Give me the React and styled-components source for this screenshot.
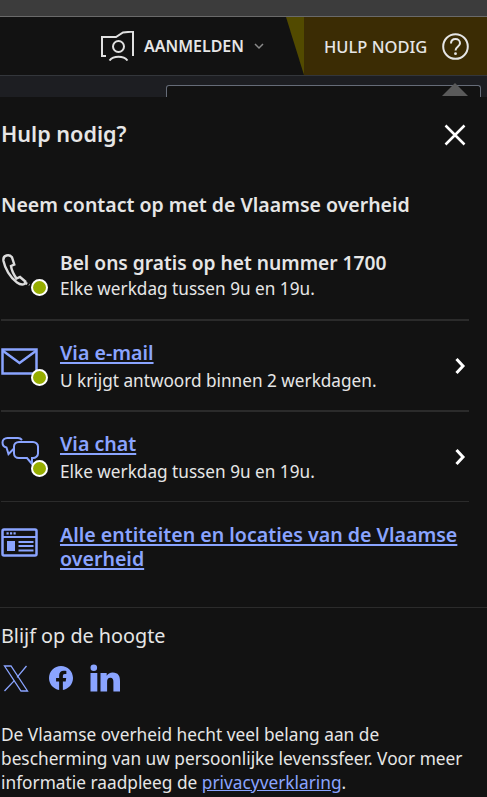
import React from "react";
import styled, { createGlobalStyle } from "styled-components";

const Global = createGlobalStyle`
  html, body { margin: 0; padding: 0; background: #121212; }
  body { font-family: "Noto Sans", "Open Sans", sans-serif; color: #e6e6e6; }
  * { box-sizing: border-box; }
`;

const Page = styled.div`
  width: 487px;
  height: 797px;
  overflow: hidden;
  background: #121212;
`;
const BrowserStrip = styled.div`
  height: 17px;
  background: #3c3c3c;
  border-bottom: 1px solid #6a6a6a;
`;
const Header = styled.header`
  height: 59px;
  display: flex;
  justify-content: flex-end;
  align-items: stretch;
  background: #121212;
  border-bottom: 1px solid #33363b;
`;
const Login = styled.div`
  display: flex;
  align-items: center;
  margin-right: 40px;
`;
const LoginLabel = styled.span`
  font-size: 16px;
  font-weight: 600;
  color: #e6e6e6;
  margin: 0 10px 0 10px;
`;
const HelpTab = styled.div`
  width: 183px;
  display: flex;
  align-items: center;
  background: #3b2c04;
  position: relative;
  padding-left: 20px;
  gap: 15px;
  font-size: 16.500px;
  font-weight: 500;
  color: #e6e6e6;
  &::before {
    content: "";
    position: absolute;
    left: -18px;
    top: 0;
    width: 18px;
    height: 58px;
    background: #524a00;
    clip-path: polygon(0 0, 100% 0, 100% 100%);
  }
`;
const SubStrip = styled.div`
  height: 21px;
  background: #1d1e22;
  display: flex;
  justify-content: flex-end;
  padding: 9px 6px 0 0;
`;
const Card = styled.div`
  width: 315px;
  height: 12px;
  border: 1px solid #666c78;
  border-bottom: none;
  border-radius: 3px 3px 0 0;
  background: #121212;
  position: relative;
  &::after {
    content: "";
    position: absolute;
    right: 12px;
    top: -3px;
    border-left: 13px solid transparent;
    border-right: 13px solid transparent;
    border-bottom: 13px solid #5a5a5a;
  }
`;
const Panel = styled.main`
  padding: 0 19px 0 1px;
`;
const TitleRow = styled.div`
  display: flex;
  justify-content: space-between;
  align-items: center;
  height: 76px;
`;
const Title = styled.h1`
  margin: 0 0 3px;
  font-size: 21.600px;
  line-height: 30px;
  font-weight: 600;
  color: #e6e6e6;
`;
const CloseBtn = styled.button`
  all: unset;
  display: flex;
  color: #fff;
  margin-right: 2px;
`;
const Lead = styled.h2`
  margin: 18px 0 29px;
  font-size: 19.500px;
  line-height: 28px;
  font-weight: 600;
  color: #e6e6e6;
`;
const Row = styled.div`
  display: flex;
  align-items: ${(p) => (p.$top ? "flex-start" : "center")};
  height: ${(p) => p.$h}px;
  padding-bottom: ${(p) => p.$pb || 0}px;
  border-bottom: ${(p) => (p.$last ? "none" : p.$thin ? "1px solid #2b2b2b" : "2px solid #2b2b2b")};
  margin-right: -1px;
`;
const IconBox = styled.div`
  width: 59px;
  flex: none;
  position: relative;
  height: 42px;
  color: #8aa4ff;
  margin-top: ${(p) => p.$mt || 0}px;
  padding-top: ${(p) => p.$pt || 0}px;
`;
const Dot = styled.span`
  position: absolute;
  left: 30px;
  top: ${(p) => p.$top}px;
  width: 17px;
  height: 17px;
  border-radius: 50%;
  background: #96ad00;
  border: 2px solid #fff;
`;
const RowBody = styled.div`
  flex: 1;
  min-width: 0;
  padding-top: ${(p) => p.$pt || 0}px;
`;
const Strong = styled.div`
  font-size: 19.200px;
  line-height: 26px;
  font-weight: 600;
  color: #e6e6e6;
`;
const Sub = styled.div`
  font-size: 17.200px;
  line-height: ${(p) => p.$lh || 27}px;
  margin-top: ${(p) => p.$mt || 0}px;
  color: #e6e6e6;
`;
const MainLink = styled.a`
  display: block;
  font-size: 19.600px;
  line-height: 24px;
  font-weight: 600;
  color: #8aa4ff;
  text-decoration: underline;
  text-decoration-thickness: 2px;
  text-underline-offset: 2px;
`;
const Chevron = styled.span`
  flex: none;
  display: flex;
  margin-right: 3px;
  color: #fff;
`;
const FullRule = styled.hr`
  margin: 0 -19px 0 -1px;
  border: none;
  border-top: 1px solid #2b2b2b;
`;
const Follow = styled.div`
  margin-top: 14px;
  font-size: 19.800px;
  line-height: 28px;
  color: #e6e6e6;
`;
const Socials = styled.div`
  display: flex;
  align-items: center;
  gap: 17px;
  margin-top: 13px;
  padding-left: 2px;
  height: 30px;
  color: #8aa4ff;
`;
const XWrap = styled.span`
  display: flex;
  margin-right: 3px;
`;
const Paragraph = styled.p`
  margin: 30px 0 0;
  font-size: 17.300px;
  line-height: 24px;
  color: #e6e6e6;
`;
const InlineLink = styled.a`
  color: #8aa4ff;
  text-decoration: underline;
`;

const UserIcon = () => (
  <svg width="33" height="30" viewBox="0 0 33 30" fill="none" stroke="#e0e0e0" strokeWidth="2">
    <path d="M5 6H1v19h4" />
    <path d="M5 6h10l7-4.500L32 0.500V25" />
    <circle cx="17.500" cy="15.500" r="5.500" />
    <path d="M8.500 29.500c4-5 14-5 18 0" />
  </svg>
);
const ChevronDown = () => (
  <svg width="10" height="7" viewBox="0 0 10 7" fill="none" stroke="#8a8a8a" strokeWidth="1.500">
    <path d="M1 1l4 4 4-4" />
  </svg>
);
const HelpIcon = () => (
  <svg width="27" height="27" viewBox="0 0 27 27" fill="none" stroke="#e6e6e6" strokeWidth="2">
    <circle cx="13.500" cy="13.500" r="12.300" />
    <path d="M9 10.500c0-3 2-4.500 4.500-4.500s4.500 1.700 4.500 4.200c0 3.600-4.500 3.600-4.500 7.300" />
    <circle cx="13.500" cy="20.700" r="1.400" fill="#e6e6e6" stroke="none" />
  </svg>
);
const CloseIcon = () => (
  <svg width="22" height="22" viewBox="0 0 22 22" fill="none" stroke="currentColor" strokeWidth="2.500">
    <path d="M1.500 1.500l19 19M20.500 1.500l-19 19" />
  </svg>
);
const PhoneIcon = () => (
  <svg width="36" height="36" viewBox="0 0 36 36" fill="none" stroke="#dcdcdc" strokeWidth="2.400">
    <path d="M5.500 1.500C3 2.200 2 4 2.500 7 4 14.500 9 23.500 16 28.500c2.500 1.800 5 2.500 7.500 1.500l.8-2.500-5.300-4.500-3.500 1.500C13 21 10.500 15.500 10 12l3.300-1.500L11 3.300C9.500 1.200 7.500 1 5.500 1.500Z" />
    <path d="M24.500 29l4 2" strokeDasharray="2 2" />
  </svg>
);
const MailIcon = () => (
  <svg width="37" height="27" viewBox="0 0 37 27" fill="none" stroke="currentColor" strokeWidth="2.500">
    <rect x="1.500" y="1.500" width="34" height="24" />
    <path d="M1.500 2.500 18.500 15l17-12.500" />
  </svg>
);
const ChatIcon = () => (
  <svg width="38" height="30" viewBox="0 0 38 30" fill="none" stroke="currentColor" strokeWidth="2">
    <path d="M21 3C20 1.800 19 1 17 1H6.500C3.500 1 1.500 3 1.500 5.500c0 3 1.500 4.500 4 5l2 6.500 5-5" />
    <path d="M18 5h14c2.500 0 5 2 5 4.500v7c0 2.500-2.500 4.500-5 4.500h-1l0 6-5-6H18c-3 0-5-2-5-4.500v-7c0-2.500 2-4.500 5-4.500Z" />
  </svg>
);
const EntityIcon = () => (
  <svg width="37" height="29" viewBox="0 0 37 29" fill="none">
    <rect x="1.500" y="1.500" width="34" height="26" rx="1.500" stroke="currentColor" strokeWidth="2.500" />
    <path d="M1.500 9h34" stroke="currentColor" strokeWidth="2" />
    <path d="M5.500 4.200h2.200v2.200H5.500zM9 4.200h2.200v2.200H9zM12.500 4.200h2.200v2.200h-2.200z" fill="currentColor" />
    <rect x="6" y="13" width="8" height="10" fill="currentColor" />
    <path d="M17.500 14h15M17.500 18h15M17.500 22.500h15" stroke="currentColor" strokeWidth="2" />
  </svg>
);
const RightChevron = () => (
  <svg width="12" height="18" viewBox="0 0 12 18" fill="none" stroke="currentColor" strokeWidth="3">
    <path d="M2.500 2 9 9l-6.500 7" />
  </svg>
);
const XIcon = () => (
  <svg width="26" height="27" viewBox="0 0 26 27" fill="none" stroke="currentColor" strokeWidth="1.300">
    <path d="M1.500 1h6.500l16.500 25H18Z" />
    <path d="M23.500 1 14 12.300M11.300 15.600 1.500 26" />
  </svg>
);
const FbIcon = () => (
  <svg width="24" height="24" viewBox="0 0 24 24">
    <path
      fill="currentColor"
      d="M24 12.070C24 5.400 18.630 0 12 0S0 5.400 0 12.070c0 6.030 4.390 11.030 10.130 11.930v-8.440H7.080v-3.490h3.050V9.410c0-3.030 1.790-4.700 4.530-4.700 1.310 0 2.690.24 2.690.24v2.970h-1.510c-1.490 0-1.960.93-1.960 1.880v2.270h3.330l-.53 3.490h-2.800V24C19.610 23.100 24 18.100 24 12.070Z"
    />
  </svg>
);
const LinkedInIcon = () => (
  <svg width="30" height="28" viewBox="0 0 30 28">
    <circle cx="3.800" cy="3.700" r="3.300" fill="currentColor" />
    <rect x="0.500" y="9" width="6.800" height="18.500" fill="currentColor" />
    <path
      fill="currentColor"
      d="M10.500 9h6.200v2.700c1-1.800 3.200-3.200 6-3.200 5.500 0 7.300 3.500 7.300 8.500v10.500h-6.600V18c0-2.500-.6-4.300-3-4.300-2.600 0-3.300 1.800-3.300 4.300v9.500h-6.600Z"
    />
  </svg>
);

export default function App() {
  return (
    <Page>
      <Global />
      <BrowserStrip />
      <Header>
        <Login>
          <UserIcon />
          <LoginLabel>AANMELDEN</LoginLabel>
          <ChevronDown />
        </Login>
        <HelpTab>
          HULP NODIG
          <HelpIcon />
        </HelpTab>
      </Header>
      <SubStrip>
        <Card />
      </SubStrip>
      <Panel>
        <TitleRow>
          <Title>Hulp nodig?</Title>
          <CloseBtn aria-label="Sluiten">
            <CloseIcon />
          </CloseBtn>
        </TitleRow>
        <Lead>Neem contact op met de Vlaamse overheid</Lead>
        <Row $h="73" $top>
          <IconBox $mt="6">
            <PhoneIcon />
            <Dot $top="25" />
          </IconBox>
          <RowBody $pt="2">
            <Strong>Bel ons gratis op het nummer 1700</Strong>
            <Sub $lh="25">Elke werkdag tussen 9u en 19u.</Sub>
          </RowBody>
        </Row>
        <Row $h="91">
          <IconBox $pt="3">
            <MailIcon />
            <Dot $top="24" />
          </IconBox>
          <RowBody $pt="4">
            <MainLink href="#">Via e-mail</MainLink>
            <Sub $mt="2">U krijgt antwoord binnen 2 werkdagen.</Sub>
          </RowBody>
          <Chevron>
            <RightChevron />
          </Chevron>
        </Row>
        <Row $h="90" $thin>
          <IconBox $pt="1">
            <ChatIcon />
            <Dot $top="24" />
          </IconBox>
          <RowBody $pt="4">
            <MainLink href="#">Via chat</MainLink>
            <Sub $mt="2">Elke werkdag tussen 9u en 19u.</Sub>
          </RowBody>
          <Chevron>
            <RightChevron />
          </Chevron>
        </Row>
        <Row $h="105" $pb="15" $last>
          <IconBox $pt="2">
            <EntityIcon />
          </IconBox>
          <RowBody>
            <MainLink href="#">Alle entiteiten en locaties van de Vlaamse overheid</MainLink>
          </RowBody>
        </Row>
        <FullRule />
        <Follow>Blijf op de hoogte</Follow>
        <Socials>
          <XWrap>
            <XIcon />
          </XWrap>
          <FbIcon />
          <LinkedInIcon />
        </Socials>
        <Paragraph>
          De Vlaamse overheid hecht veel belang aan de bescherming van uw persoonlijke levenssfeer. Voor meer
          informatie raadpleeg de <InlineLink href="#">privacyverklaring</InlineLink>.
        </Paragraph>
      </Panel>
    </Page>
  );
}
